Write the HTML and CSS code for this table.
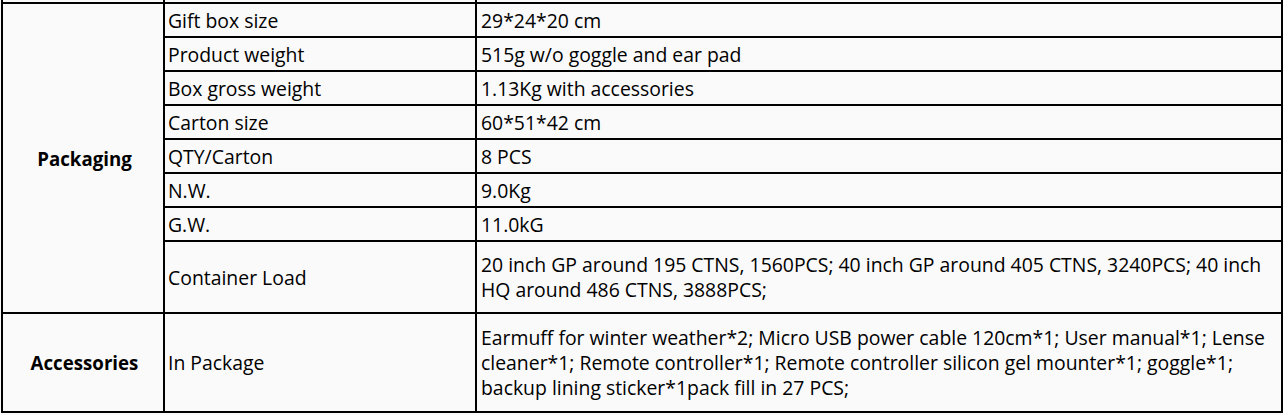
FILE: index.html
```html
<!DOCTYPE html>
<html>
<head>
<meta charset="utf-8">
<link rel="stylesheet" href="styles.css">
</head>
<body>
<table class="spec">
  <colgroup>
    <col class="c1">
    <col class="c2">
    <col class="c3">
  </colgroup>
  <tbody>
    <tr class="stub"><td></td><td></td><td></td></tr>
    <tr class="row">
      <td class="group" rowspan="8">Packaging</td>
      <td class="label">Gift box size</td>
      <td class="value">29*24*20 cm</td>
    </tr>
    <tr class="row"><td class="label">Product weight</td><td class="value">515g w/o goggle and ear pad</td></tr>
    <tr class="row"><td class="label">Box gross weight</td><td class="value">1.13Kg with accessories</td></tr>
    <tr class="row"><td class="label">Carton size</td><td class="value">60*51*42 cm</td></tr>
    <tr class="row"><td class="label">QTY/Carton</td><td class="value">8 PCS</td></tr>
    <tr class="row"><td class="label">N.W.</td><td class="value">9.0Kg</td></tr>
    <tr class="row"><td class="label">G.W.</td><td class="value">11.0kG</td></tr>
    <tr class="row-load"><td class="label">Container Load</td><td class="value">20 inch GP around 195 CTNS, 1560PCS; 40 inch GP around 405 CTNS, 3240PCS; 40 inch HQ around 486 CTNS, 3888PCS;</td></tr>
    <tr class="row-acc">
      <td class="group">Accessories</td>
      <td class="label">In Package</td>
      <td class="value">Earmuff for winter weather*2; Micro USB power cable 120cm*1; User manual*1; Lense cleaner*1; Remote controller*1; Remote controller silicon gel mounter*1; goggle*1; backup lining sticker*1pack fill in 27 PCS;</td>
    </tr>
  </tbody>
</table>
</body>
</html>
```
FILE: styles.css
```css
html, body {
  margin: 0;
  padding: 0;
  background: #fafafa;
}
body {
  font-family: "Open Sans", "Noto Sans", sans-serif;
  font-size: 19.4px;
  color: #000;
}
.spec {
  border-collapse: collapse;
  margin-left: 1px;
  width: 1280px;
  table-layout: fixed;
}
.c1 { width: 162px; }
.c2 { width: 312px; }
.c3 { width: 806px; }
.spec td {
  border: 2px solid #000;
  padding: 0 4px 0 3px;
  line-height: 25px;
  vertical-align: middle;
  text-align: left;
}
.spec td.value { padding-left: 4px; }
.stub { height: 3px; }
.stub td { border-top: none; border-bottom: 2px solid #000; padding: 0; line-height: 0; }
.row { height: 34px; }
.row-load { height: 72px; }
.row-acc { height: 99px; }
.spec td.group {
  font-weight: bold;
  font-size: 18.7px;
  text-align: center;
  padding-right: 0;
}
```
